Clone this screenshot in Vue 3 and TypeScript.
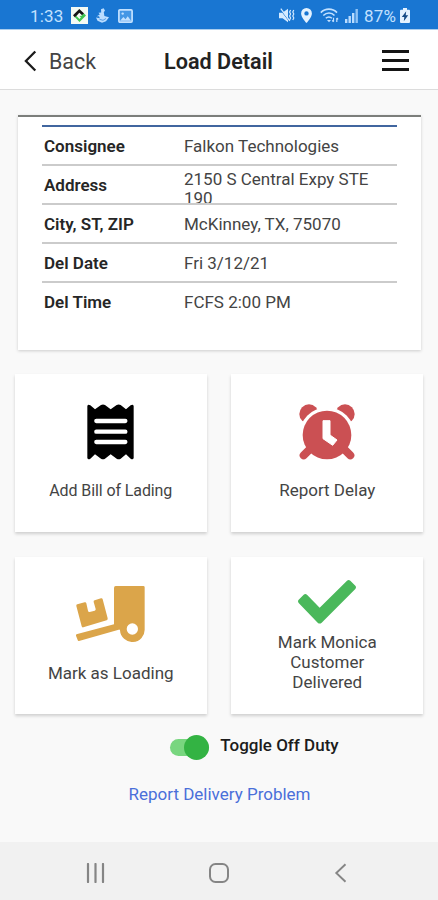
<script setup lang="ts">
import { ref } from 'vue'

interface Field {
  label: string
  value: string
}

const fields: Field[] = [
  { label: 'Consignee', value: 'Falkon Technologies' },
  { label: 'Address', value: '2150 S Central Expy STE 190' },
  { label: 'City, ST, ZIP', value: 'McKinney, TX, 75070' },
  { label: 'Del Date', value: 'Fri 3/12/21' },
  { label: 'Del Time', value: 'FCFS 2:00 PM' },
]

const onDuty = ref<boolean>(true)
</script>

<template>
  <div class="screen">
    <div class="status">
      <span class="time">1:33</span>
      <svg class="s-app" width="17" height="17" viewBox="0 0 17 17">
        <rect width="17" height="17" fill="#f4faf4" />
        <path d="M2 8.300 8.300 2l4.800 4.600-2 1.600-2.800-2.400L4 10.500z" fill="#151515" />
        <path d="M4 10.300 8.500 15 15 8.500 13 6.500 10.500 8.800 8.400 8.900l1.500 1.300-1.400 1.700-3-3z" fill="#3fc650" />
      </svg>
      <svg class="s-boat" width="13" height="15" viewBox="0 0 13 15" fill="#b9dcff">
        <path d="M5 1.200 7.600.3 9 2.400 7.800 4.200 8.400 8 13 9.300 10 13.300 6 14.700 1.500 12.800 0 9.600l3.800.7L3 8.200H.8l3-1.800L2.500 4.800l2.700-.4z" />
        <path d="M3.500 11.300 7 12.300 10 10.500" fill="none" stroke="#1976d2" stroke-width=".6" />
      </svg>
      <svg class="s-pic" width="15" height="14" viewBox="0 0 15 14">
        <rect x=".9" y=".9" width="13.200" height="12.200" rx="1" fill="#4597e5" stroke="#c3e1ff" stroke-width="1.700" />
        <path d="m2 11.800 3.400-3.700 2.100 2.100 2.200-3 3.400 4.600z" fill="#c3e1ff" />
        <circle cx="4.700" cy="4.600" r="1.200" fill="#c3e1ff" />
      </svg>
      <span class="grow"></span>
      <svg class="s-mute" width="16" height="15" viewBox="0 0 16 15">
        <path d="M0 4.800h3.400L9 .8v13.400l-5.400-4H0z" fill="#d5eaff" />
        <path d="m.8.8 9.600 12.600" stroke="#1976d2" stroke-width="1" />
        <path d="m1.800.6 9 12.200" stroke="#d5eaff" stroke-width="1.200" />
        <path d="m11.600 2-1 2 1 2-1 2 1 2-1 2M14.800 2l-1 2 1 2-1 2 1 2-1 2" fill="none" stroke="#d5eaff" stroke-width="1.200" />
      </svg>
      <svg class="s-pin" width="11" height="15" viewBox="0 0 11 15">
        <path d="M5.500 0A5.400 5.400 0 0 0 .1 5.400C.1 9.300 5.500 15 5.500 15s5.400-5.700 5.400-9.600A5.400 5.400 0 0 0 5.500 0zm0 7.600a2.200 2.200 0 1 1 0-4.400 2.200 2.200 0 0 1 0 4.400z" fill="#e4f2ff" />
      </svg>
      <svg class="s-wifi" width="19" height="15" viewBox="0 0 19 15" fill="none" stroke="#c3e1ff" stroke-width="1.600">
        <path d="M.8 4.600C5.300-.1 12.500-.1 17 4.600M3.300 7.500c3.300-3.300 8.200-3.300 11.200 0M5.800 10.300c1.800-1.800 4.300-1.800 6.100 0" />
        <path d="m9 14.200-2-2.100h4z" fill="#c3e1ff" stroke="none" />
        <path d="M13.500 9.800v4m-1.300-1.400 1.300 1.400M16.800 14v-4m1.300 1.400L16.800 10" stroke-width="1.200" />
      </svg>
      <svg class="s-signal" width="13" height="14" viewBox="0 0 13 14" fill="#b9dcff">
        <rect y="10" width="2.400" height="4" />
        <rect x="3.500" y="7" width="2.400" height="7" />
        <rect x="7" y="4" width="2.400" height="10" />
        <rect x="10.500" width="2.400" height="14" fill="#8fc3f5" />
      </svg>
      <span class="pct">87%</span>
      <svg class="s-batt" width="10" height="15" viewBox="0 0 10 15">
        <path d="M3 0h4v1.800h2a1 1 0 0 1 1 1V14a1 1 0 0 1-1 1H1a1 1 0 0 1-1-1V2.800a1 1 0 0 1 1-1h2z" fill="#e4f2ff" />
        <path d="M6.200 3.200 1.800 9h2.500L3.800 13.200 8.200 7.300H5.700z" fill="#164b86" />
      </svg>
    </div>

    <header class="header">
      <button class="back">
        <svg width="13" height="22" viewBox="0 0 13 22">
          <path d="M11.300 1.500 1.900 11l9.400 9.500" fill="none" stroke="#1b1b1b" stroke-width="2.300" />
        </svg>
        <span>Back</span>
      </button>
      <h1>Load Detail</h1>
      <button class="menu"><i></i><i></i><i></i></button>
    </header>

    <main class="content">
      <section class="card">
        <div class="table">
          <div v-for="f in fields" :key="f.label" class="row">
            <span class="label">{{ f.label }}</span>
            <span class="value">{{ f.value }}</span>
          </div>
        </div>
      </section>

      <div class="tiles">
        <button class="tile">
          <svg class="i-receipt" width="47" height="56" viewBox="0 0 141 168">
            <path d="M1 6Q3 0 10 4l14 12L42 3q6-3 12 0l17 13L89 3q6-3 12 0l16 13 14-12q7-4 9 2v156q-2 6-9 2l-14-13-16 13q-6 3-12 0l-18-13-17 13q-6 3-12 0l-18-13-14 13q-7 4-9-2z" fill="#000" />
            <path d="M28 51h87M28 83h87M28 114h87" stroke="#fff" stroke-width="13" stroke-linecap="round" />
          </svg>
          <span class="narrow">Add Bill of Lading</span>
        </button>

        <button class="tile">
          <svg class="i-clock" width="56" height="56" viewBox="0 0 168 168">
            <g fill="#cb5053">
              <circle cx="30" cy="30" r="29" />
              <circle cx="138" cy="30" r="29" />
            </g>
            <circle cx="84" cy="93" r="83" fill="#fff" />
            <path d="m14 154 24-24M154 154l-24-24" stroke="#cb5053" stroke-width="24" stroke-linecap="round" />
            <circle cx="84" cy="93" r="73" fill="#cb5053" />
            <path d="M72 50h21v43l21 15-13 16-29-20z" fill="#fff" stroke="#fff" stroke-width="3" stroke-linejoin="round" />
          </svg>
          <span>Report Delay</span>
        </button>

        <button class="tile">
          <svg class="i-dolly" width="69" height="56" viewBox="0 0 207 168">
            <g fill="#dba54a">
              <path d="M119 0h83q4 0 4 4v125a37 37 0 0 1-74 4q-1-3-4-2L9 165q-3 1-4-3l-5-13q-1-4 4-5l110-29V6q0-6 5-6z" />
              <path d="m4 55 22-6q4-1 5 3l5 22q1 5 5 4l15-4q4-1 3-5l-6-21q-1-4 3-5l19-6q4-1 5 3l15 57q1 5-3 6l-70 21q-4 1-5-3L1 60q-1-4 3-5z" />
            </g>
            <circle cx="169" cy="129" r="17" fill="#fff" />
          </svg>
          <span>Mark as Loading</span>
        </button>

        <button class="tile">
          <svg class="i-check" width="58" height="44" viewBox="0 0 174 132">
            <path d="M2 59 17 44q5-4 10 0l38 39 82-81q5-4 10 0l15 15q4 5 0 10L71 128q-6 5-12 0L2 69q-4-5 0-10z" fill="#4ab85b" />
          </svg>
          <span>Mark Monica<br>Customer<br>Delivered</span>
        </button>
      </div>

      <div class="duty">
        <button class="switch" :class="{ on: onDuty }" @click="onDuty = !onDuty"><i></i></button>
        <span>Toggle Off Duty</span>
      </div>

      <a class="problem">Report Delivery Problem</a>
    </main>

    <nav class="nav">
      <svg width="20" height="20" viewBox="0 0 20 20"><path d="M2 1v18M9.500 1v18M17 1v18" stroke="#858585" stroke-width="2.200" stroke-linecap="round" /></svg>
      <svg width="22" height="22" viewBox="0 0 22 22"><rect x="2" y="2" width="18" height="18" rx="5.500" fill="none" stroke="#858585" stroke-width="2" /></svg>
      <svg width="20" height="20" viewBox="0 0 20 20"><path d="M14.500 1.300 5.300 10l9.200 8.700" fill="none" stroke="#858585" stroke-width="1.900" /></svg>
    </nav>
  </div>
</template>

<style>
body {
  margin: 0;
}
</style>

<style scoped>
.screen {
  display: flex;
  flex-direction: column;
  width: 438px;
  height: 900px;
  overflow: hidden;
  background: #f9f9f9;
  color: #444;
  font-family: Roboto, sans-serif;
  font-size: 17px;
}
svg {
  display: block;
  flex: none;
}
button {
  margin: 0;
  padding: 0;
  border: 0;
  background: none;
  color: inherit;
  font: inherit;
}
.status {
  box-sizing: border-box;
  display: flex;
  align-items: center;
  height: 29px;
  padding: 2px 28px 0 30px;
  background: #1976d2;
  color: #c3e1ff;
}
.grow {
  flex: 1;
}
.time {
  width: 41px;
  letter-spacing: 0.2px;
}
.s-boat {
  margin-left: 8px;
}
.s-pic {
  margin-left: 9px;
}
.s-pin {
  margin-left: 6px;
}
.s-wifi {
  margin-left: 8px;
}
.s-signal {
  margin-left: 6px;
}
.pct {
  margin-left: 6px;
  width: 36px;
  letter-spacing: 0.2px;
}
.header {
  box-sizing: border-box;
  display: grid;
  grid-template-columns: 1fr auto 1fr;
  align-items: center;
  height: 61px;
  padding: 3px 29px 0 24px;
  border-top: 1px solid #a9cdee;
  border-bottom: 1px solid #dcdcdc;
  background: #fff;
}
.back {
  display: flex;
  align-items: center;
  gap: 12px;
  font-size: 21.4px;
}
.header h1 {
  margin: 0 -4px 0 0;
  color: #222;
  font-size: 21.6px;
  font-weight: 600;
}
.menu {
  display: flex;
  flex-direction: column;
  justify-self: end;
  gap: 6px;
  width: 27px;
  margin-top: -2px;
}
.menu i {
  height: 3px;
  background: #151515;
}
.content {
  display: flex;
  flex: 1;
  flex-direction: column;
  align-items: center;
}
.card {
  box-sizing: border-box;
  width: 403px;
  height: 235px;
  margin-top: 25px;
  padding: 8px 24px 0;
  border-top: 2px solid #7c7e7b;
  background: #fff;
  box-shadow: 0 1px 3px rgba(0, 0, 0, 0.18);
}
.table {
  border-top: 2px solid #41669f;
}
.row {
  box-sizing: border-box;
  display: grid;
  grid-template-columns: 140px 1fr;
  align-items: center;
  height: 39px;
  padding-left: 2.500px;
  border-bottom: 2px solid #cbcbcb;
}
.row:last-child {
  border-bottom-color: transparent;
}
.label {
  color: #262626;
  font-weight: 600;
}
.value {
  padding: 1px 10px 0 0;
  overflow: hidden;
  line-height: 19px;
}
.row:nth-child(2) .value {
  height: 33px;
  padding-top: 0;
  margin-top: 3px;
}
.tiles {
  display: grid;
  grid-template-columns: 192px 192px;
  gap: 25px 24.500px;
  margin-top: 24px;
}
.tile {
  display: flex;
  flex-direction: column;
  align-items: center;
  justify-content: flex-start;
  height: 157.500px;
  background: #fff;
  box-shadow: 0 2px 3px rgba(0, 0, 0, 0.17);
  line-height: 20px;
}
.i-receipt,
.i-clock {
  margin: 30px 0 20px;
}
.i-dolly {
  margin: 29px 0 21px;
}
.i-check {
  margin: 23px 0 8px;
}
.narrow {
  margin-top: 1px;
  font-size: 16px;
  letter-spacing: -0.100px;
}
.duty {
  display: flex;
  align-items: center;
  gap: 11px;
  margin: 21px 0 0 71px;
  height: 25px;
  color: #1c1c1c;
  font-weight: 500;
}
.duty span {
  margin-top: -5px;
}
.switch {
  position: relative;
  width: 39px;
  height: 17px;
  border-radius: 9px;
  background: #ccc;
}
.switch.on {
  background: #78d67f;
}
.switch i {
  position: absolute;
  top: -4px;
  left: 0;
  width: 25px;
  height: 25px;
  border-radius: 50%;
  background: #fff;
}
.switch.on i {
  left: 14px;
  background: #33b343;
}
.problem {
  margin: 24px 0 0 1px;
  color: #4a6fd9;
}
.nav {
  display: flex;
  align-items: center;
  justify-content: space-between;
  box-sizing: border-box;
  height: 58px;
  padding: 3px 87px 0 86px;
  background: #f1f1f1;
}
</style>
